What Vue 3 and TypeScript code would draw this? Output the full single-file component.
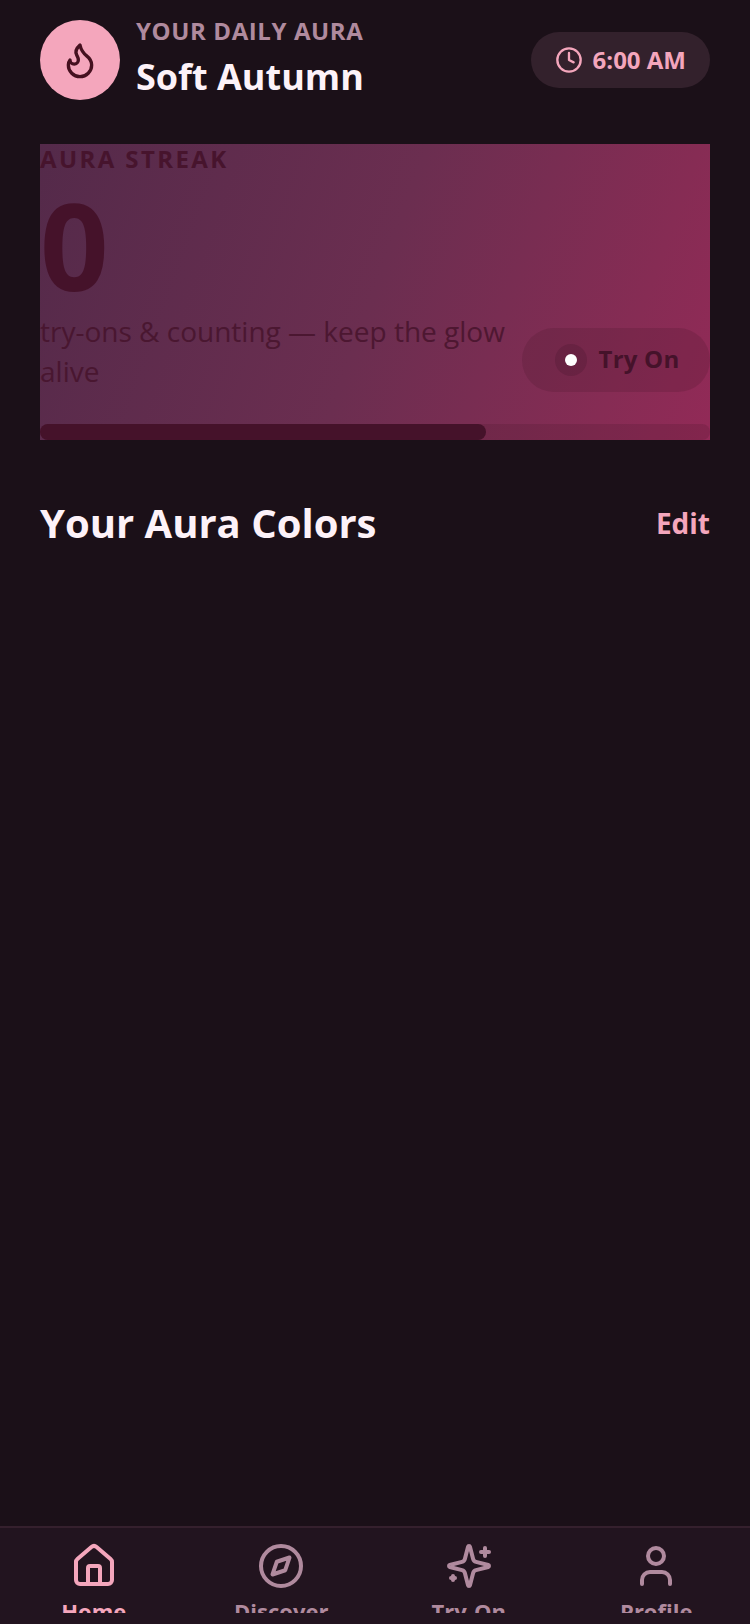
<template>
  <div class="page">
    <main class="content">
      <header class="top">
        <div class="top__who">
          <div class="avatar">
            <svg class="avatar__icon" viewBox="0 0 24 24">
              <path d="M8.5 14.5A2.5 2.5 0 0 0 11 12c0-1.38-.5-2-1-3-1.072-2.143-.224-4.054 2-6 .5 2.5 2 4.9 4 6.5 2 1.6 3 3.5 3 5.5a7 7 0 1 1-14 0c0-1.153.433-2.294 1-3a2.5 2.5 0 0 0 2.5 2.5z" />
            </svg>
          </div>
          <div class="top__text">
            <span class="top__eyebrow">YOUR DAILY AURA</span>
            <span class="top__title">Soft Autumn</span>
          </div>
        </div>
        <div class="time">
          <svg class="time__icon" viewBox="0 0 24 24">
            <circle cx="12" cy="12" r="10" />
            <path d="M12 6v6l4 2" />
          </svg>
          <span>6:00 AM</span>
        </div>
      </header>

      <section class="streak">
        <div class="streak__body">
          <div class="streak__left">
            <div class="streak__label">AURA STREAK</div>
            <div class="streak__count">{{ streak }}</div>
            <p class="streak__desc">try-ons &amp; counting — keep the glow alive</p>
          </div>
          <button class="try">
            <span class="try__dot"><i></i></span>
            <span class="try__text">Try On</span>
          </button>
        </div>
        <div class="bar">
          <div class="bar__fill" :style="{ width: progress + '%' }"></div>
        </div>
      </section>

      <div class="section-head">
        <h2>Your Aura Colors</h2>
        <span class="section-head__edit">Edit</span>
      </div>
    </main>

    <nav class="tabs">
      <div v-for="tab in tabs" :key="tab.label" class="tab" :class="{ 'tab--active': tab.active }">
        <svg class="tab__icon" viewBox="0 0 24 24">
          <circle v-for="(c, i) in tab.circles" :key="i" :cx="c[0]" :cy="c[1]" :r="c[2]" />
          <path v-for="d in tab.paths" :key="d" :d="d" />
        </svg>
        <span class="tab__label">{{ tab.label }}</span>
      </div>
    </nav>
  </div>
</template>

<script setup lang="ts">
interface Tab {
  label: string
  active?: boolean
  paths: string[]
  circles?: [number, number, number][]
}

const streak = 0
const progress = 66.6

const tabs: Tab[] = [
  {
    label: 'Home',
    active: true,
    paths: [
      'M15 21v-8a1 1 0 0 0-1-1h-4a1 1 0 0 0-1 1v8',
      'M3 10a2 2 0 0 1 .709-1.528l7-5.999a2 2 0 0 1 2.582 0l7 5.999A2 2 0 0 1 21 10v9a2 2 0 0 1-2 2H5a2 2 0 0 1-2-2z'
    ]
  },
  {
    label: 'Discover',
    circles: [[12, 12, 10]],
    paths: ['m16.24 7.76-2.12 6.36-6.36 2.12 2.12-6.36z']
  },
  {
    label: 'Try-On',
    paths: [
      'M9.937 15.5A2 2 0 0 0 8.5 14.063l-6.135-1.582a.5.5 0 0 1 0-.962L8.5 9.936A2 2 0 0 0 9.937 8.5l1.582-6.135a.5.5 0 0 1 .963 0L14.063 8.5A2 2 0 0 0 15.5 9.937l6.135 1.581a.5.5 0 0 1 0 .964L15.5 14.063a2 2 0 0 0-1.437 1.437l-1.582 6.135a.5.5 0 0 1-.963 0z',
      'M20 3v4',
      'M22 5h-4',
      'M4 17v2',
      'M5 18H3'
    ]
  },
  {
    label: 'Profile',
    circles: [[12, 7, 4]],
    paths: ['M19 21v-2a4 4 0 0 0-4-4H9a4 4 0 0 0-4 4v2']
  }
]
</script>

<style>
html, body { background: #1b1018; }
</style>

<style scoped>
.page {
  height: 1624px; display: flex; flex-direction: column; overflow: hidden;
  background: #1b1018; color: #fdf2f8;
  font-family: "Open Sans", "Noto Sans", sans-serif;
}
svg { fill: none; stroke: currentColor; stroke-width: 2; stroke-linecap: round; stroke-linejoin: round; flex: none; }
.content { flex: 1; padding: 20px 40px 0; min-height: 0; }

.top { display: flex; justify-content: space-between; align-items: center; height: 80px; }
.top__who { display: flex; align-items: center; gap: 16px; }
.avatar {
  width: 80px; height: 80px; border-radius: 50%; background: #f4a6bc; color: #45101f;
  display: flex; align-items: center; justify-content: center;
}
.avatar__icon { width: 40px; height: 40px; }
.top__text { display: flex; flex-direction: column; gap: 8px; margin-top: -6px; }
.top__eyebrow { font-size: 24px; line-height: 32px; font-weight: 700; letter-spacing: 0.6px; color: #b08a9e; }
.top__title { font-size: 36px; line-height: 44px; font-weight: 700; color: #fdf2f8; }
.time {
  display: flex; align-items: center; gap: 10px; height: 56px; padding: 0 24px; border-radius: 28px;
  background: #33212c; color: #f4a6bc; font-size: 24px; font-weight: 700; line-height: 54px;
}
.time__icon { width: 28px; height: 28px; }

.streak {
  margin-top: 44px; height: 296px; display: flex; flex-direction: column;
  background: linear-gradient(110deg, #542a4a 0%, #6b2e50 50%, #862c54 85%, #922a57 100%);
  color: #45122a;
}
.streak__body { display: flex; align-items: flex-end; justify-content: space-between; gap: 16px; }
.streak__left { flex: 1; min-width: 0; }
.streak__label { font-size: 24px; line-height: 30px; font-weight: 700; letter-spacing: 2.4px; opacity: .9; }
.streak__count { font-size: 120px; line-height: 134px; padding-top: 4px; font-weight: 700; }
.streak__desc { margin: 0; font-size: 28px; line-height: 40px; opacity: .8; position: relative; top: -1px; }
.try {
  display: flex; align-items: center; gap: 12px; height: 64px; width: 188px; padding: 0 0 0 2px; flex: none;
  border: 0; border-radius: 32px; background: rgba(69, 18, 42, .2); color: #45122a; white-space: nowrap;
  font: 700 24px "Open Sans", sans-serif; letter-spacing: .2px; justify-content: center;
}
.try__text { line-height: 30px; margin-top: -2px; }
.try__dot {
  width: 32px; height: 32px; border-radius: 50%; background: rgba(69, 18, 42, .25);
  display: flex; align-items: center; justify-content: center;
}
.try__dot i { width: 12px; height: 12px; border-radius: 50%; background: #fff; }
.bar { margin-top: 32px; height: 16px; border-radius: 8px; background: rgba(69, 18, 42, .2); }
.bar__fill { height: 100%; border-radius: 8px; background: #45122a; }

.section-head { margin-top: 50px; display: flex; justify-content: space-between; align-items: center; height: 64px; }
.section-head h2 { margin: 0; font-size: 40px; font-weight: 700; color: #fdf2f8; }
.section-head__edit { font-size: 28px; font-weight: 700; color: #f4a6bc; margin-top: 2px; }

.tabs {
  height: 98px; flex: none; box-sizing: border-box; padding: 14px 0 11px;
  display: grid; grid-template-columns: repeat(4, 1fr);
  background: #22141f; border-top: 2px solid #35202d;
}
.tab { display: flex; flex-direction: column; align-items: center; gap: 6px; overflow: hidden; color: #b08a9e; }
.tab--active { color: #f4a6bc; }
.tab__icon { width: 48px; height: 48px; }
.tab__label { font-size: 22px; line-height: 30px; font-weight: 700; }
</style>
